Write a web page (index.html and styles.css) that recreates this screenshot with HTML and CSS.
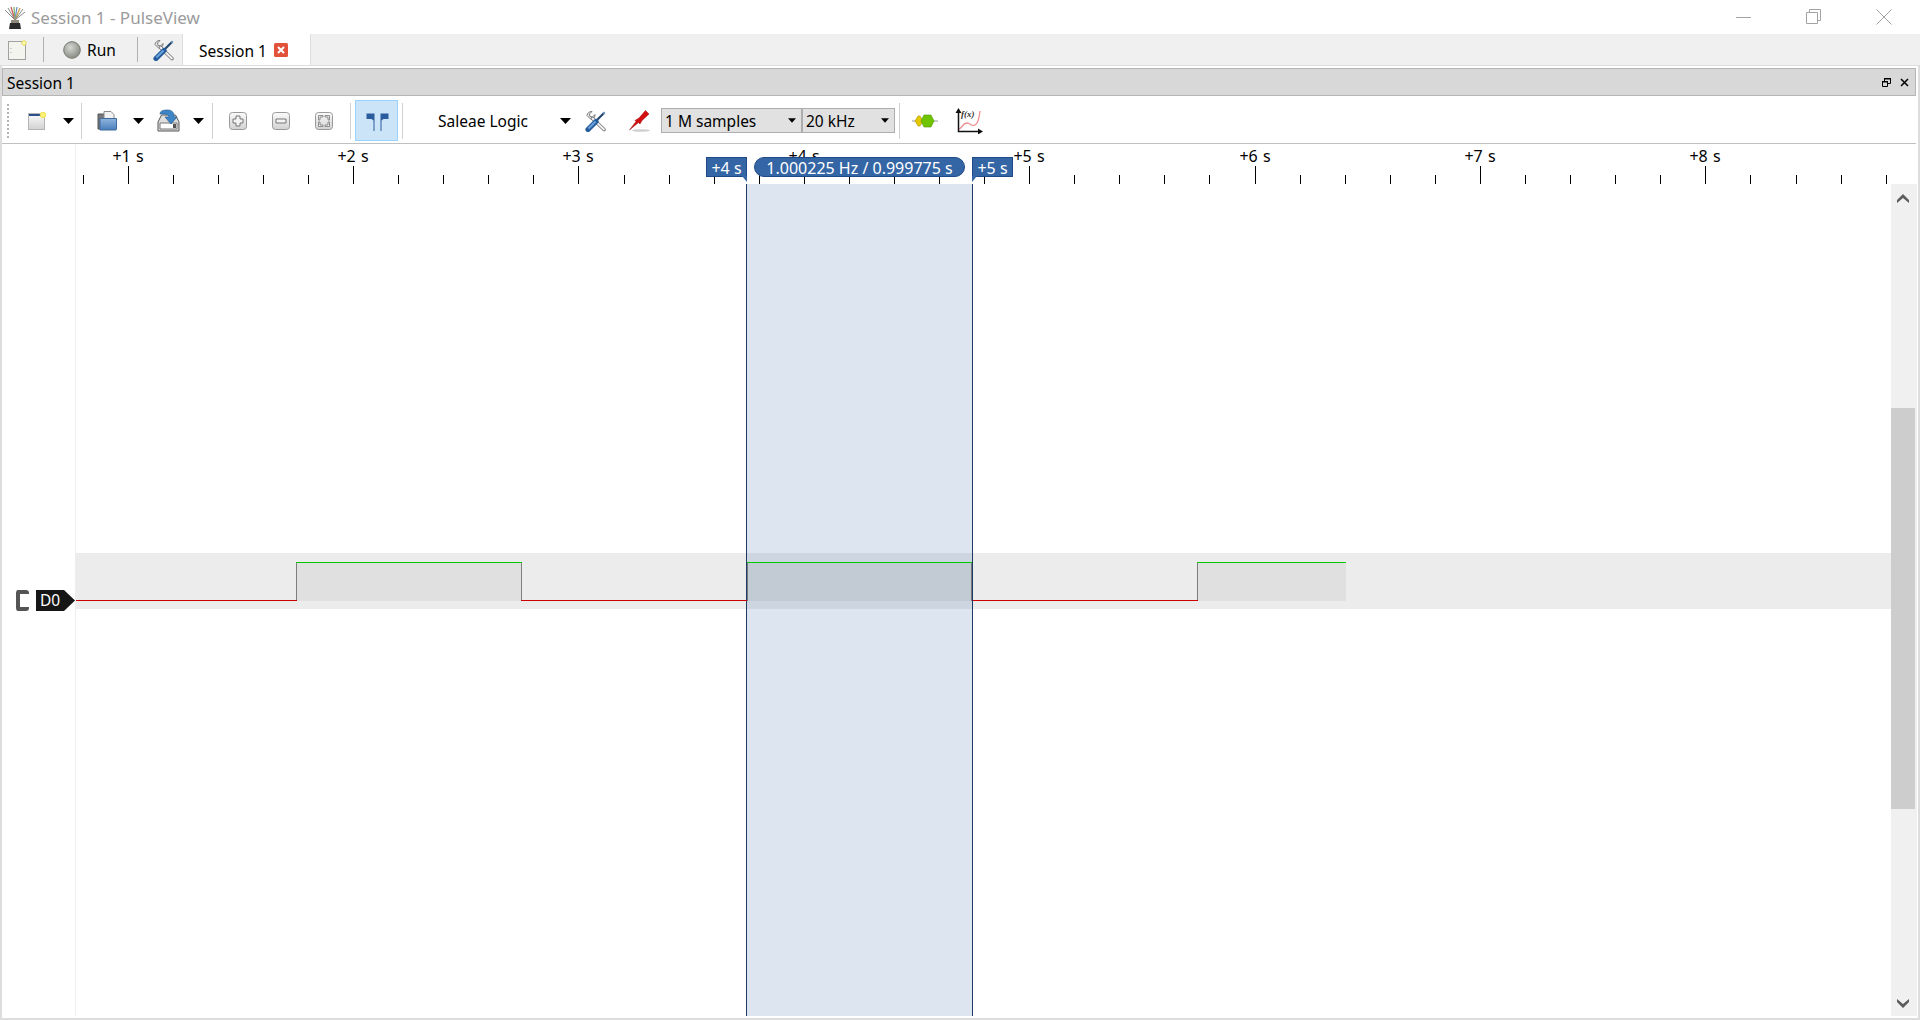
FILE: index.html
```html
<!DOCTYPE html>
<html lang="en">
<head>
    <meta charset="UTF-8">
    <meta name="viewport" content="width=device-width, initial-scale=1.0">
    <title>Session 1 - PulseView</title>
    <link rel="stylesheet" href="styles.css">
</head>
<body>
    <svg class="defs" width="0" height="0">
        <defs>
            <linearGradient id="keyFill" x1="0" y1="0" x2="0" y2="1">
                <stop offset="0" stop-color="#fbfbfb"/>
                <stop offset="1" stop-color="#d2d2d2"/>
            </linearGradient>
            <linearGradient id="folderFill" x1="0" y1="0" x2="0" y2="1">
                <stop offset="0" stop-color="#8fb4de"/>
                <stop offset="1" stop-color="#4a7fbc"/>
            </linearGradient>
            <radialGradient id="runFill" cx="0.4" cy="0.35" r="0.7">
                <stop offset="0" stop-color="#d4d6d2"/>
                <stop offset="1" stop-color="#85877f"/>
            </radialGradient>
            <symbol id="tools" viewBox="0 0 22 22">
                <path d="M2 5.500a4.500 4.500 0 0 1 5-4l-2.500 2.500.5 2.500 2.500.5 2.500-2.500a4.500 4.500 0 0 1-4 5z" fill="#e8e8e8" stroke="#7c7c7c"/>
                <path d="M7.500 8.500 19 19.500" stroke="#7c7c7c" stroke-width="3.600" stroke-linecap="round"/>
                <path d="M7.500 8.500 19 19.500" stroke="#f2f2f2" stroke-width="1.800" stroke-linecap="round"/>
                <path d="M12 10 19 3" stroke="#23466f" stroke-width="2.200"/>
                <path d="M19 1.500 20.500 3 19 4.500 17.500 3z" fill="#6c93c0"/>
                <path d="M3 19.500 11 11.500" stroke="#245c9c" stroke-width="5.200" stroke-linecap="round"/>
                <path d="M3.500 18.500 10.500 11.500" stroke="#6ba3dc" stroke-width="2"/>
            </symbol>
            <symbol id="triangle" viewBox="0 0 11 6">
                <path d="M0 0h11L5.500 6z"/>
            </symbol>
        </defs>
    </svg>

    <header class="titlebar">
        <svg class="app-icon" width="22" height="24" viewBox="0 0 22 24">
            <path d="M11 14 1 4M11 14 4 2" stroke="#8a8a8a" fill="none"/>
            <path d="M11 14 7 1" stroke="#d35a5a" stroke-width="1.300"/>
            <path d="M11 14 10 1" stroke="#7fb56a" stroke-width="1.300"/>
            <path d="M11 14 13 1" stroke="#6a8fd0" stroke-width="1.300"/>
            <path d="M11 14 16 2" stroke="#c9a24a" stroke-width="1.300"/>
            <path d="M11 14 19 3M11 14 21 6" stroke="#8a8a8a"/>
            <path d="M7 14h8v3H7z" fill="#8f8a7c"/>
            <path d="M6 17h10l1 6H5z" fill="#2b2b2b"/>
        </svg>
        <span class="app-title">Session 1 - PulseView</span>
        <div class="window-buttons">
            <svg width="16" height="16" viewBox="0 0 16 16"><path d="M0 8.500h15" stroke="#a3a3a3"/></svg>
            <svg width="16" height="16" viewBox="0 0 16 16"><path d="M.5 3.500h11v11H.5zM3.500 3.500V.5h11v11h-3" fill="none" stroke="#a3a3a3"/></svg>
            <svg width="16" height="16" viewBox="0 0 16 16"><path d="M.5.500l15 15M15.500.5l-15 15" stroke="#a3a3a3"/></svg>
        </div>
    </header>

    <nav class="tabbar">
        <div class="tabbar-new">
            <svg width="20" height="20" viewBox="0 0 20 20">
                <rect x="1.500" y="1.500" width="17" height="18" fill="#f4f4ee" stroke="#a0a0a0"/>
                <path d="M4 8v1M4 12v1" stroke="#aaa"/>
                <circle cx="17" cy="3" r="2.200" fill="#fff8c0" stroke="#e6d84a"/>
            </svg>
        </div>
        <span class="tabbar-sep"></span>
        <div class="run-button">
            <svg width="18" height="18" viewBox="0 0 18 18"><circle cx="9" cy="9" r="8.300" fill="url(#runFill)" stroke="#77796f"/></svg>
            <span>Run</span>
        </div>
        <span class="tabbar-sep"></span>
        <div class="tabbar-tools"><svg width="22" height="22"><use href="#tools"/></svg></div>
        <div class="tab">
            <span class="tab-text">Session 1</span>
            <svg class="tab-close" width="14" height="14" viewBox="0 0 14 14">
                <rect width="14" height="14" rx="1.500" fill="#e2513a"/>
                <path d="M4 4l6 6M10 4l-6 6" stroke="#fff" stroke-width="2"/>
            </svg>
        </div>
    </nav>

    <main class="dock">
        <div class="dock-title">
            <span class="dock-text">Session 1</span>
            <div class="dock-buttons">
                <svg width="9" height="9" viewBox="0 0 9 9"><path d="M.5 3.500h5v5h-5zM2.500 3V.5h6v5H6" fill="none" stroke="#000"/><path d="M0 3h6v1.500H0zM2 0h7v1.500H2z"/></svg>
                <svg width="9" height="9" viewBox="0 0 9 9"><path d="M1 1l7 7M8 1l-7 7" stroke="#000" stroke-width="1.500"/></svg>
            </div>
        </div>

        <div class="toolbar">
            <span class="toolbar-handle"></span>
            <div class="tool tool-new">
                <svg width="20" height="20" viewBox="0 0 20 20">
                    <rect x="1.500" y="2.500" width="16" height="16" fill="url(#keyFill)" stroke="#b4b4b4"/>
                    <path d="M2 4h14" stroke="#2b4f8c" stroke-width="2"/>
                    <circle cx="16" cy="4" r="2.800" fill="#fff27a" stroke="#ece24e"/>
                </svg>
            </div>
            <div class="tool-arrow"><svg width="11" height="6"><use href="#triangle"/></svg></div>
            <span class="sep sep-a"></span>
            <div class="tool tool-new">
                <svg width="20" height="20" viewBox="0 0 20 20">
                    <path d="M1 3h7v15H1z" fill="#777" stroke="#555"/>
                    <path d="M7 .5h7l3 3V8H7z" fill="#f2f2f2" stroke="#8a8a8a"/>
                    <path d="M3 7.500h16.500V18a1 1 0 0 1-1 1H3z" fill="url(#folderFill)" stroke="#3f6a9e"/>
                </svg>
            </div>
            <div class="tool-arrow"><svg width="11" height="6"><use href="#triangle"/></svg></div>
            <div class="tool tool-save">
                <svg width="23" height="23" viewBox="0 0 23 23">
                    <path d="M4.500 6h14l3.500 7v9H1v-9z" fill="#dedede" stroke="#555"/>
                    <path d="M3 14h17v6H3z" fill="#fff" stroke="#777"/>
                    <path d="M16 15h3v4h-3z" fill="#555"/>
                    <path d="M3 5c0-3 3-4 7-4 5 0 7 2 7 7h3l-6 7-6-7h4c0-2-2-3-5-3H3z" fill="#3d85c6" stroke="#2d6296" stroke-width=".7"/>
                </svg>
            </div>
            <div class="tool-arrow"><svg width="11" height="6"><use href="#triangle"/></svg></div>
            <span class="sep sep-b"></span>
            <div class="tool tool-zoom">
                <svg width="18" height="18" viewBox="0 0 18 18">
                    <rect x=".5" y=".5" width="17" height="17" rx="3" fill="url(#keyFill)" stroke="#9a9a9a"/>
                    <path d="M7 4h4v3h3v4h-3v3H7v-3H4V7h3z" fill="#f4f4f4" stroke="#777"/>
                </svg>
            </div>
            <div class="tool tool-zoom">
                <svg width="18" height="18" viewBox="0 0 18 18">
                    <rect x=".5" y=".5" width="17" height="17" rx="3" fill="url(#keyFill)" stroke="#9a9a9a"/>
                    <path d="M4 7h10v4H4z" fill="#f4f4f4" stroke="#777"/>
                </svg>
            </div>
            <div class="tool tool-zoom">
                <svg width="18" height="18" viewBox="0 0 18 18">
                    <rect x=".5" y=".5" width="17" height="17" rx="3" fill="url(#keyFill)" stroke="#9a9a9a"/>
                    <path d="M8 3.500H3.500V8h1.500V5H8zM10 3.500h4.500V8H13V5h-3zM8 14.500H3.500V10h1.500v3H8zM10 14.500h4.500V10H13v3h-3z" fill="#f4f4f4" stroke="#777" stroke-width=".8"/>
                </svg>
            </div>
            <span class="sep sep-c"></span>
            <div class="tool tool-cursor">
                <svg width="24" height="22" viewBox="0 0 24 22">
                    <path d="M1.500 3.500h8V21h-1V10.500l-2-1.500h-5zM23.500 3.500h-8V21h1V10.500l2-1.500h5z" fill="#2b5c9e"/>
                </svg>
            </div>
            <span class="sep sep-d"></span>
            <div class="device-select">
                <span>Saleae Logic</span>
                <svg width="11" height="6"><use href="#triangle"/></svg>
            </div>
            <div class="tool tool-device">
                <svg width="22" height="22"><use href="#tools"/></svg>
            </div>
            <div class="tool tool-probe">
                <svg width="22" height="24" viewBox="0 0 22 24">
                    <ellipse cx="13" cy="21.500" rx="9" ry="1.300" fill="#cfcfcf"/>
                    <path d="M1.500 21 8 12.500 7 11.500l4-2.500 6.500-7.500 3.500 3.500-7 6.500-2 3.500-1.500-1.500z" fill="#d40f0f" stroke="#9e0b0b" stroke-width=".5"/>
                </svg>
            </div>
            <div class="combo combo-samples"><span>1 M samples</span><svg width="8" height="5"><use href="#triangle"/></svg></div>
            <div class="combo combo-rate"><span>20 kHz</span><svg width="8" height="5"><use href="#triangle"/></svg></div>
            <span class="sep sep-e"></span>
            <div class="tool tool-decoder">
                <svg width="26" height="14" viewBox="0 0 26 14">
                    <path d="M0 7h26" stroke="#999"/>
                    <path d="M3 7l3-5h2l3 5-3 5H6z" fill="#e4c800" stroke="#a99400" stroke-width=".6"/>
                    <path d="M9 7l3-6h7l3 6-3 6h-7z" fill="#6fc400" stroke="#4f9400" stroke-width=".6"/>
                </svg>
            </div>
            <div class="tool tool-math">
                <svg width="28" height="26" viewBox="0 0 28 26">
                    <path d="M4 21c3-1 4-6 8-6s4 4 8 2 4-8 5-14" fill="none" stroke="#ef8f8f" stroke-width="1.300"/>
                    <text class="math-label" x="6" y="9">f(x)</text>
                    <path d="M3.500 3v20.500H25" fill="none" stroke="#111" stroke-width="1.500"/>
                    <path d="M3.500 0 6.500 5h-6zM28 23.500 23 20.500v6z" fill="#111"/>
                </svg>
            </div>
        </div>

        <section class="trace-area">
            <svg class="ruler" width="1916" height="40" viewBox="2 144 1916 40">
                <path class="ruler-edge" d="M75.500 144v40"/>
                <path class="ticks" d="M83.500 175v9M128.500 166v18M173.500 175v9M218.500 175v9M263.500 175v9M308.500 175v9M353.500 166v18M398.500 175v9M443.500 175v9M488.500 175v9M533.500 175v9M578.500 166v18M624.500 175v9M669.500 175v9M714.500 175v9M759.500 175v9M804.500 166v18M849.500 175v9M894.500 175v9M939.500 175v9M984.500 175v9M1029.500 166v18M1074.500 175v9M1119.500 175v9M1164.500 175v9M1209.500 175v9M1255.500 166v18M1300.500 175v9M1345.500 175v9M1390.500 175v9M1435.500 175v9M1480.500 166v18M1525.500 175v9M1570.500 175v9M1615.500 175v9M1660.500 175v9M1705.500 166v18M1750.500 175v9M1796.500 175v9M1841.500 175v9M1886.500 175v9"/>
                <text class="tick-label" x="128" y="162">+1 s</text>
                <text class="tick-label" x="353" y="162">+2 s</text>
                <text class="tick-label" x="578" y="162">+3 s</text>
                <text class="tick-label" x="804" y="162">+4 s</text>
                <text class="tick-label" x="1029" y="162">+5 s</text>
                <text class="tick-label" x="1255" y="162">+6 s</text>
                <text class="tick-label" x="1480" y="162">+7 s</text>
                <text class="tick-label" x="1705" y="162">+8 s</text>
            </svg>

            <div class="flag flag-left">+4 s</div>
            <div class="flag-pill">1.000225 Hz / 0.999775 s</div>
            <div class="flag flag-right">+5 s</div>

            <div class="trace-view">
                <div class="trace-labels">
                    <div class="trace-label">
                        <span class="probe-clip"></span>
                        <span class="channel-tag">D0</span>
                    </div>
                </div>
                <div class="viewport">
                    <div class="trace-band"></div>
                    <div class="cursor-range"></div>
                    <svg class="wave" width="1815" height="832" viewBox="76 184 1815 832">
                        <path class="wave-fill" d="M296 563h225v38H296zM747 563h225v38H747zM1197 563h149v38h-149z"/>
                        <path class="wave-edge" d="M296.500 563v38M521.500 563v38M747.500 563v38M971.500 563v38M1197.500 563v38"/>
                        <path class="wave-low" d="M76 600.500h221M521 600.500h226M973 600.500h225"/>
                        <path class="wave-high" d="M296 562.500h226M747 562.500h225M1197 562.500h149"/>
                    </svg>
                </div>
                <div class="scrollbar">
                    <svg class="scroll-arrow" width="12" height="10" viewBox="0 0 12 10"><path d="M0 6 6 0l6 6v3L6 4 0 9z" fill="#5c5c5c"/></svg>
                    <div class="scroll-track"><div class="scroll-thumb"></div></div>
                    <svg class="scroll-arrow" width="12" height="10" viewBox="0 0 12 10"><path d="M0 1l6 5 6-5v3l-6 6-6-6z" fill="#5c5c5c"/></svg>
                </div>
            </div>
        </section>
    </main>
</body>
</html>
```

FILE: styles.css
```css
:root {
    --text-font: "Noto Sans", "Open Sans", sans-serif;
    --flag-color: #3465a4;
    --flag-border: #204a87;
    --line-color: #ddd;
    --bar-color: #f0f0f0;
}

* {
    box-sizing: border-box;
}

html, body {
    margin: 0;
    height: 100%;
}

body {
    height: 1020px;
    overflow: hidden;
    display: flex;
    flex-direction: column;
    background-color: #fff;
    color: #000;
    font-family: var(--text-font);
    font-size: 15.5px;
}

svg {
    display: block;
    flex: none;
}

.defs {
    position: absolute;
}

/* window title */

.titlebar {
    height: 34px;
    flex: none;
    display: flex;
    align-items: center;
    padding-left: 4px;
}

.app-icon {
    margin-top: 1px;
}

.app-title {
    margin-left: 5px;
    color: #9b9b9b;
    font-size: 17px;
}

.window-buttons {
    margin-left: auto;
    display: flex;
    gap: 54px;
    padding-right: 28px;
}

/* tab row */

.tabbar {
    height: 31px;
    flex: none;
    display: flex;
    align-items: center;
    padding-left: 7px;
    background-color: var(--bar-color);
}

.tabbar-new {
    width: 36px;
}

.tabbar-sep {
    width: 1px;
    height: 25px;
    background-color: #b0b0b0;
}

.run-button {
    width: 93px;
    display: flex;
    align-items: center;
    gap: 6px;
    padding-left: 19px;
}

.tabbar-tools {
    width: 44px;
    padding-left: 15px;
}

.tab {
    height: 32px;
    align-self: flex-start;
    width: 129px;
    display: flex;
    align-items: center;
    gap: 7px;
    padding-left: 16px;
    background-color: #fff;
    border: 1px solid var(--line-color);
    border-top: 0;
    border-bottom: 0;
}

.tab-text {
    padding-top: 1px;
}

/* dock */

.dock {
    flex: 1;
    min-height: 0;
    display: flex;
    flex-direction: column;
    border-top: 1px solid var(--line-color);
    border-left: 2px solid var(--line-color);
    border-right: 2px solid var(--line-color);
    border-bottom: 2px solid var(--line-color);
    padding-top: 2px;
    padding-bottom: 2px;
}

.dock-title {
    height: 28px;
    flex: none;
    margin-right: 2px;
    display: flex;
    align-items: center;
    justify-content: space-between;
    padding: 0 6px 0 4px;
    background-color: #d8d8d8;
    border: 1px solid #b5b5b5;
}

.dock-text {
    padding-top: 2px;
}

.dock-buttons {
    display: flex;
    gap: 9px;
}

/* toolbar */

.toolbar {
    height: 48px;
    flex: none;
    margin-right: 2px;
    padding-top: 2px;
    display: flex;
    align-items: center;
    border-bottom: 1px solid #c0c0c0;
}

.toolbar-handle {
    width: 4px;
    height: 36px;
    margin: 0 6px 0 4px;
    background-image: radial-gradient(circle, #b4b4b4 1px, transparent 1px);
    background-size: 4px 4px;
}

.tool {
    height: 41px;
    display: flex;
    align-items: center;
    justify-content: center;
}

.tool-new {
    width: 42px;
}

.tool-save {
    width: 40px;
}

.tool-arrow {
    width: 20px;
    display: flex;
    justify-content: center;
}

.sep {
    width: 1px;
    height: 36px;
    background-color: #d0d0d0;
}

.sep-a {
    margin: 0 4px 0 3px;
}

.sep-b {
    margin: 0 3.5px 0 4px;
}

.sep-c {
    margin: 0 4px 0 4.5px;
}

.sep-d {
    margin: 0 0 0 4px;
}

.sep-e {
    margin: 0 0 0 4px;
}

.tool-zoom {
    width: 43px;
}

.tool-cursor {
    width: 43px;
    background-color: #cce4f7;
    border: 1px solid #99d1ff;
}

.device-select {
    width: 172px;
    display: flex;
    align-items: center;
    justify-content: space-between;
    padding: 0 4px 0 35px;
}

.tool-device {
    width: 42px;
}

.tool-probe {
    width: 44px;
}

.combo {
    height: 25px;
    display: flex;
    align-items: center;
    justify-content: space-between;
    padding: 0 5px 0 3px;
    background-color: #e1e1e1;
    border: 1px solid #adadad;
}

.combo-samples {
    width: 141px;
}

.combo-rate {
    width: 93px;
}

.tool-decoder {
    width: 50px;
}

.tool-math {
    width: 38px;
}

.math-label {
    font-family: "Liberation Serif", serif;
    font-size: 9px;
    font-style: italic;
    font-weight: bold;
    fill: #333;
}

/* ruler and cursors */

.trace-area {
    flex: 1;
    min-height: 0;
    position: relative;
    display: flex;
    flex-direction: column;
}

.ruler-edge {
    stroke: #eee;
    fill: none;
}

.ticks {
    stroke: #000;
    fill: none;
}

.tick-label {
    font-size: 16px;
    word-spacing: 1px;
    text-anchor: middle;
}

.flag,
.flag-pill {
    position: absolute;
    top: 13px;
    height: 20px;
    padding-top: 1px;
    display: flex;
    align-items: center;
    justify-content: center;
    color: #fff;
    font-size: 16px;
    background-color: var(--flag-color);
    border: 1px solid var(--flag-border);
}

.flag {
    width: 41px;
    z-index: 3;
}

.flag::after {
    content: "";
    position: absolute;
    bottom: -6px;
    border-top: 6px solid var(--flag-color);
}

.flag-left {
    left: 704px;
}

.flag-left::after {
    right: -1px;
    border-left: 5px solid transparent;
}

.flag-right {
    left: 970px;
}

.flag-right::after {
    left: -1px;
    border-right: 5px solid transparent;
}

.flag-pill {
    left: 752px;
    width: 211px;
    border-radius: 10px;
    white-space: nowrap;
    z-index: 3;
}

/* traces */

.trace-view {
    flex: 1;
    min-height: 0;
    display: flex;
    margin-right: 1px;
}

.trace-labels {
    width: 74px;
    flex: none;
    padding-top: 406px;
    border-right: 1px solid #eee;
}

.trace-label {
    display: flex;
    align-items: center;
    padding-left: 14px;
}

.probe-clip {
    width: 13px;
    height: 21px;
    border: 4px solid #555;
    border-right: 0;
    border-radius: 3px;
}

.channel-tag {
    width: 39px;
    height: 21px;
    margin-left: 7px;
    padding-left: 4px;
    line-height: 21px;
    color: #fff;
    background-color: #161616;
    clip-path: polygon(0 0, 28px 0, 100% 50%, 28px 100%, 0 100%);
}

.viewport {
    flex: 1;
    min-width: 0;
    position: relative;
    padding-top: 369px;
}

.trace-band {
    height: 56px;
    background-color: #ececec;
}

.cursor-range {
    position: absolute;
    left: 670px;
    top: 0;
    bottom: 0;
    width: 227px;
    background-color: rgba(52, 101, 164, 0.17);
    border-left: 1px solid #1d3a63;
    border-right: 1px solid #1d3a63;
}

.wave {
    position: absolute;
    left: 0;
    top: 0;
}

.wave-fill {
    fill: rgba(0, 0, 0, 0.05);
}

.wave-edge {
    stroke: rgba(100, 100, 100, 0.8);
    fill: none;
}

.wave-low {
    stroke: #cc0000;
    fill: none;
}

.wave-high {
    stroke: #00c800;
    fill: none;
}

.scrollbar {
    width: 26px;
    flex: none;
    position: relative;
    display: flex;
    flex-direction: column;
    align-items: center;
    padding: 10px 3px 8px 0;
    background-color: var(--bar-color);
}

.scroll-track {
    flex: 1;
}

.scroll-thumb {
    position: absolute;
    left: 0;
    top: 224px;
    width: 24px;
    height: 401px;
    background-color: #cdcdcd;
}
```
